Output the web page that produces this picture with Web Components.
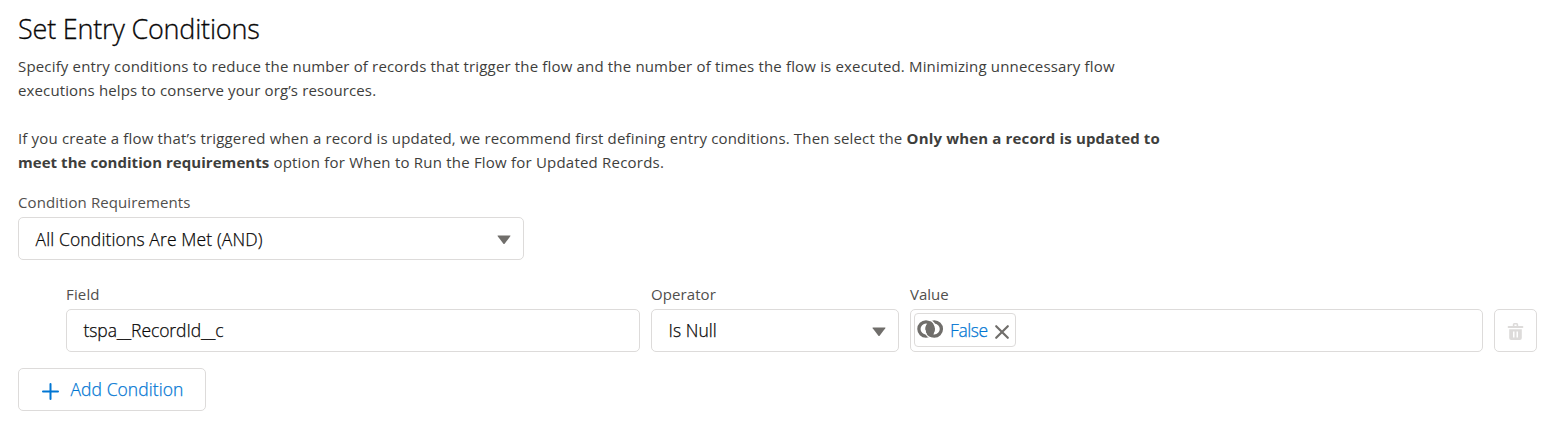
<!DOCTYPE html>
<html lang="en">
<head>
<meta charset="utf-8">
<title>Set Entry Conditions</title>
<style>
body{margin:0;background:#fff;font-family:"Open Sans","Noto Sans",sans-serif;color:#080707}
</style>
</head>
<body>
<entry-conditions></entry-conditions>

<template id="t-entry">
<style>
:host{display:block;box-sizing:border-box;height:442px;padding:12px 26px 0 18px;overflow:hidden}
h2{margin:0;font-weight:300;-webkit-text-stroke:.3px currentColor;font-size:27px;line-height:34px;letter-spacing:-.2px;height:42px}
p{margin:0 0 24px;font-size:15px;line-height:24px;color:#3e3e3c;white-space:nowrap}
p + p{margin-bottom:0}
.a{letter-spacing:.166px}.b{letter-spacing:.13px}.c{letter-spacing:.163px}
.d{letter-spacing:.16px}.e{letter-spacing:.05px}.f{letter-spacing:.21px}
.req{width:506px;margin-top:18px}
.row{display:grid;grid-template-columns:574px 248px 573px 43px;column-gap:11px;align-items:end;margin:24px 0 16px 48px}
</style>
<h2>Set Entry Conditions</h2>
<p><span class="a">Specify entry conditions to reduce the number of records that trigger the flow and the number of times the flow is executed. Minimizing unnecessary flow</span><br><span class="b">executions helps to conserve your org’s resources.</span></p>
<p><span class="c">If you create a flow that’s triggered when a record is updated, we recommend first defining entry conditions. Then select the </span><b class="d">Only when a record is updated to</b><br><b class="e">meet the condition requirements</b><span class="f"> option for When to Run the Flow for Updated Records.</span></p>
<form-field class="req" label="Condition Requirements" arrow style="--ls:.1px;--vs:.13px;--dt:1px;--db:0px">All Conditions Are Met (AND)</form-field>
<div class="row">
<form-field label="Field" style="--ls:.15px;--vs:-.08px">tspa__RecordId__c</form-field>
<form-field label="Operator" arrow style="--ls:.08px;--vs:.05px">Is Null</form-field>
<form-field label="Value" flush><value-pill>False</value-pill></form-field>
<delete-button></delete-button>
</div>
<add-button>Add Condition</add-button>
</template>

<template id="t-field">
<style>
:host{display:block;min-width:0}
label{display:block;font-size:15px;line-height:20px;height:20px;margin-bottom:5px;color:#514f4d;letter-spacing:var(--ls,0);white-space:nowrap}
.box{box-sizing:border-box;height:43px;border:1px solid #dddbda;border-radius:5px;background:#fff;display:flex;align-items:center;justify-content:space-between;padding:0 12px 0 16.5px;font-size:17.5px;font-weight:300;-webkit-text-stroke:.25px currentColor;line-height:24px;letter-spacing:var(--vs,0);white-space:nowrap}
.text{padding-top:var(--dt,0);padding-bottom:var(--db,1px)}
:host([flush]) .box{padding:0 3px}
svg{display:none;width:14px;height:10px;margin-top:3px}
:host([arrow]) svg{display:block}
</style>
<label></label>
<div class="box"><div class="text"><slot></slot></div><svg viewBox="0 0 14 10"><path d="M.9.6h12.2q.7 0 .2.7L7.6 8.8q-.6.6-1.2 0L.7 1.3Q.2.6.9.6z" fill="#706e6b"/></svg></div>
</template>

<template id="t-pill">
<style>
:host{box-sizing:border-box;display:flex;align-items:center;width:102px;height:34px;border:1px solid #dddbda;border-radius:4px;padding-left:2px;color:#0176d3;letter-spacing:-.4px}
.link{flex:none;width:28px;height:20px;margin:-2px 5px 0 0}
.x{flex:none;width:16px;height:16px;margin:3px 0 0 6.5px}
</style>
<svg class="link" viewBox="0 0 28 20"><path d="M13.15 2.2a8.8 8.8 0 0 1 0 15.6 8.8 8.8 0 0 1 0-15.6z" fill="#706e6b"/><g fill="none" stroke="#706e6b" stroke-width="3.3"><circle cx="9" cy="10" r="7.1"/><circle cx="17.3" cy="10" r="7.1"/></g><g fill="none" stroke="#fff" stroke-width="1.3"><path d="M12.4 .9A9.6 9.6 0 0 1 18.5 9"/><path d="M13.9 19.1A9.6 9.6 0 0 1 7.8 11"/></g></svg>
<slot></slot>
<svg class="x" viewBox="0 0 16 16"><path d="M2.2 2.2l11.6 11.6M13.8 2.2L2.2 13.8" stroke="#706e6b" stroke-width="2.2" stroke-linecap="round"/></svg>
</template>

<template id="t-delete">
<style>
:host{box-sizing:border-box;display:flex;align-items:center;justify-content:center;width:43px;height:43px;border:1px solid #dddbda;border-radius:5px}
svg{width:17px;height:19px;margin-top:2px}
</style>
<svg viewBox="0 0 17 19"><g fill="#dddbda"><rect x=".7" y="4" width="15.6" height="2" rx=".8"/><path d="M5.8 4.5V2.4Q5.8.9 7.2.9h2.6q1.4 0 1.4 1.5v2.1H9.6V2.6H7.4v1.9z"/><path fill-rule="evenodd" d="M2.2 7.3h12.6V16q0 2-2 2H4.2q-2 0-2-2zM6 9.6v5.8h1.5V9.6zm3.5 0v5.8H11V9.6z"/></g></svg>
</template>

<template id="t-add">
<style>
:host{box-sizing:border-box;display:flex;align-items:center;width:188px;height:43px;border:1px solid #dddbda;border-radius:5px;padding:0 0 1px 23px;color:#0176d3;font-size:17.5px;font-weight:300;-webkit-text-stroke:.25px currentColor;line-height:24px;letter-spacing:.06px;white-space:nowrap}
svg{width:18px;height:18px;margin:4px 10.5px 0 0}
</style>
<svg viewBox="0 0 18 18"><path d="M1 9.5h15M8.5 2v15" stroke="#0176d3" stroke-width="2" stroke-linecap="round"/></svg>
<slot></slot>
</template>

<script>
function define(name, id, setup) {
  customElements.define(name, class extends HTMLElement {
    constructor() {
      super();
      this.attachShadow({mode: 'open'}).append(document.getElementById(id).content.cloneNode(true));
    }
    connectedCallback() { if (setup) setup(this); }
  });
}
define('form-field', 't-field', el => {
  el.shadowRoot.querySelector('label').textContent = el.getAttribute('label');
});
define('value-pill', 't-pill');
define('delete-button', 't-delete');
define('add-button', 't-add');
define('entry-conditions', 't-entry');
</script>
</body>
</html>
